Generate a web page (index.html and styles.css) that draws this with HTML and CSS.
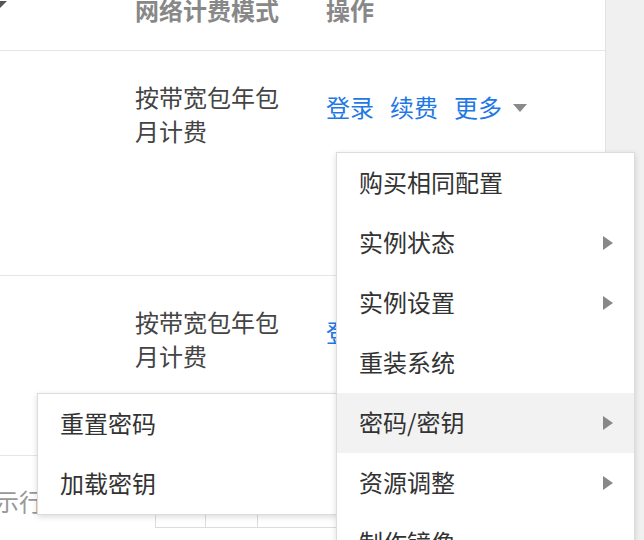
FILE: index.html
```html
<!DOCTYPE html>
<html lang="zh-CN">
<head>
<meta charset="utf-8">
<title>实例列表</title>
<link rel="stylesheet" href="styles.css">
</head>
<body>
<div class="page">
  <div class="panel">
    <div class="row head">
      <div class="cell"><span class="sort-caret"></span></div>
      <div class="cell">网络计费模式</div>
      <div class="cell">操作</div>
    </div>
    <div class="row body row-1">
      <div class="cell"></div>
      <div class="cell text">按带宽包年包月计费</div>
      <div class="cell ops">
        <a class="link">登录</a><a class="link">续费</a><a class="link">更多</a><span class="caret-down"></span>
      </div>
    </div>
    <div class="row body row-2">
      <div class="cell"></div>
      <div class="cell text">按带宽包年包月计费</div>
      <div class="cell ops">
        <a class="link">登录</a><a class="link">续费</a><a class="link">更多</a><span class="caret-down"></span>
      </div>
    </div>
    <div class="footer">
      <span class="rows-label">每页显示行数</span>
      <div class="pager">
        <span class="pbtn b1"></span><span class="pbtn b2"></span><span class="pbtn b3"></span>
      </div>
    </div>
  </div>
  <div class="side"></div>
</div>

<ul class="menu main-menu">
  <li class="item">购买相同配置</li>
  <li class="item">实例状态<span class="caret-right"></span></li>
  <li class="item">实例设置<span class="caret-right"></span></li>
  <li class="item">重装系统</li>
  <li class="item active">密码/密钥<span class="caret-right"></span></li>
  <li class="item">资源调整<span class="caret-right"></span></li>
  <li class="item">制作镜像</li>
</ul>

<ul class="menu sub-menu">
  <li class="item">重置密码</li>
  <li class="item">加载密钥</li>
</ul>
</body>
</html>
```

FILE: styles.css
```css
* { box-sizing: border-box; }

html, body {
  margin: 0;
  padding: 0;
  width: 644px;
  height: 540px;
  overflow: hidden;
  background: #f0f0f0;
  font-family: "Noto Sans CJK SC", "Noto Sans", sans-serif;
  font-size: 24px;
  color: #333;
}

.page {
  display: flex;
  height: 540px;
}

.panel {
  width: 606px;
  background: #fff;
  border-right: 1px solid #e2e2e2;
  overflow: hidden;
}

.side {
  flex: 1;
  background: #f0f0f0;
}

.row {
  display: grid;
  grid-template-columns: 135px 191px 1fr;
  border-bottom: 1px solid #e6e6e6;
}

.head {
  height: 51px;
  color: #888;
  font-weight: 700;
  line-height: 20px;
}

.sort-caret {
  display: block;
  width: 0;
  height: 0;
  margin-left: -7px;
  margin-top: 1px;
  border-top: 7px solid #555;
  border-left: 7px solid transparent;
  border-right: 7px solid transparent;
}

.body .cell {
  line-height: 34px;
}

.row-1 { height: 225px; }
.row-2 { height: 180px; }

.text {
  padding-top: 29px;
  padding-right: 40px;
  color: #444;
}

.ops {
  padding-top: 39px;
  display: flex;
  align-items: flex-start;
  white-space: nowrap;
}

.link {
  color: #1e78e6;
  margin-right: 16px;
  text-decoration: none;
}

.link:nth-of-type(3) { margin-right: 11px; }

.caret-down {
  display: inline-block;
  width: 0;
  height: 0;
  margin-top: 14px;
  border-top: 8px solid #8a8a8a;
  border-left: 7px solid transparent;
  border-right: 7px solid transparent;
}

.footer {
  display: flex;
  align-items: flex-start;
  padding-top: 33px;
}

.rows-label {
  margin-left: -77px;
  width: 232px;
  flex: none;
  color: #999;
  line-height: 24px;
  white-space: nowrap;
}

.pager {
  display: flex;
}

.pbtn {
  display: block;
  height: 39px;
  border: 1px solid #dcdcdc;
  background: #fff;
}

.pbtn + .pbtn { margin-left: -1px; }
.b1 { width: 51px; }
.b2 { width: 53px; }
.b3 { width: 120px; }

/* dropdown menus (overlay) */
.menu {
  position: absolute;
  margin: 0;
  padding: 0;
  list-style: none;
  background: #fff;
  border: 1px solid #dcdcdc;
  box-shadow: 0 2px 6px rgba(0, 0, 0, 0.14);
}

.main-menu {
  left: 336px;
  top: 152px;
  width: 299px;
  z-index: 2;
}

.sub-menu {
  left: 37px;
  top: 393px;
  width: 300px;
  z-index: 1;
}

.item {
  height: 60px;
  display: flex;
  align-items: center;
  justify-content: space-between;
  padding: 0 21px 3px 22px;
  color: #333;
  white-space: nowrap;
}

.item.active { background: #f2f2f2; }

.caret-right {
  display: block;
  width: 0;
  height: 0;
  margin-top: 3px;
  border-left: 10px solid #888;
  border-top: 7px solid transparent;
  border-bottom: 7px solid transparent;
}
```
